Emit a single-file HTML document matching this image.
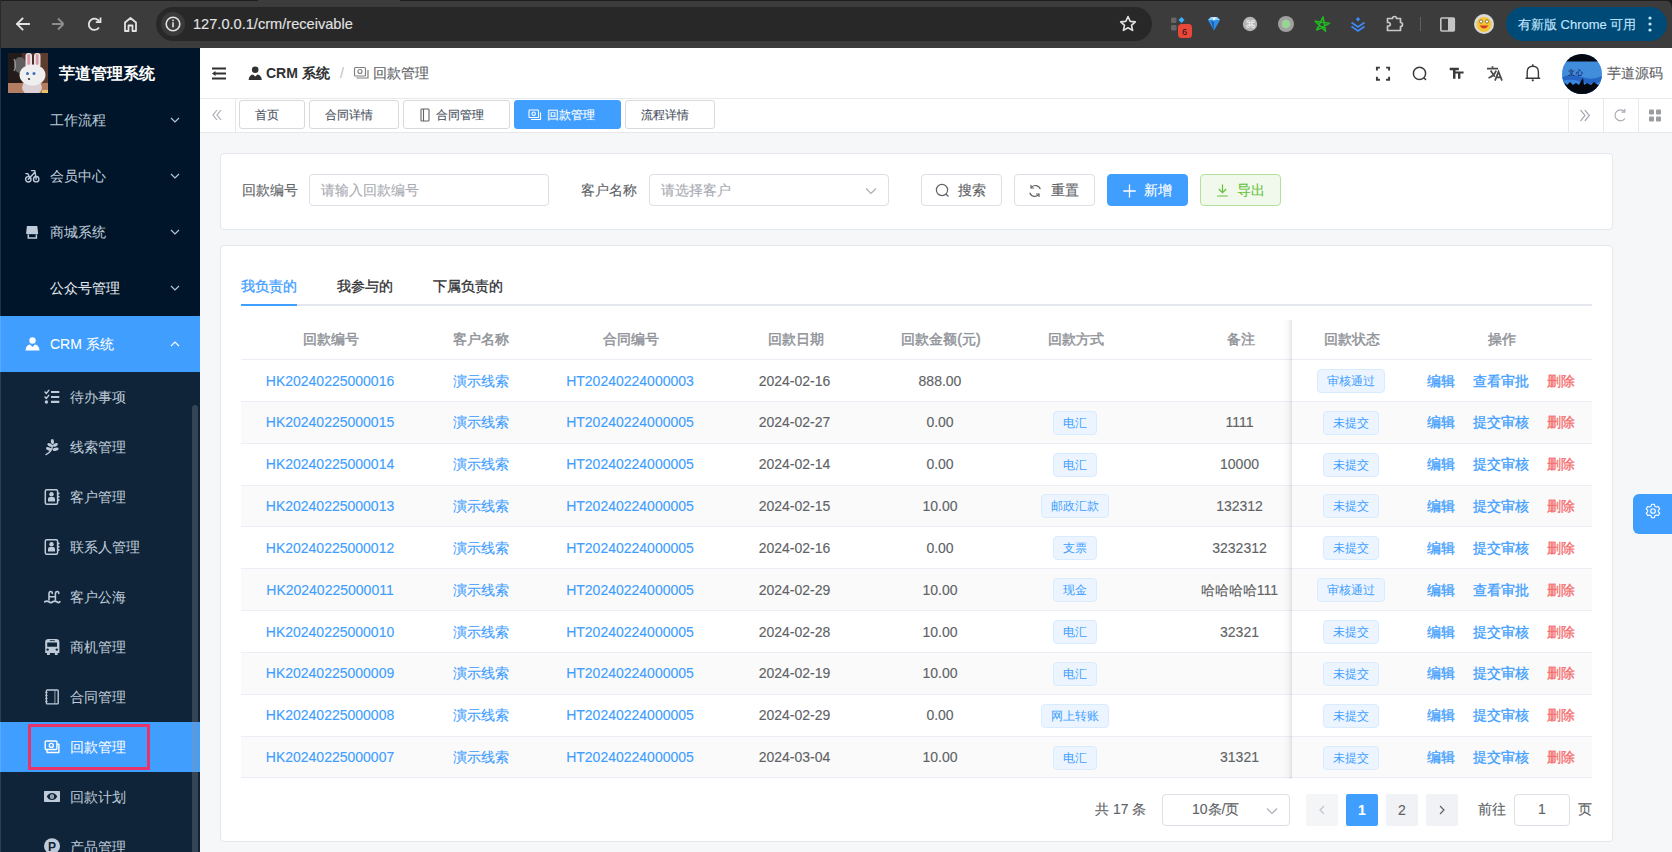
<!DOCTYPE html>
<html><head><meta charset="utf-8"><title>回款管理</title>
<style>
*{box-sizing:border-box;margin:0;padding:0}
html,body{width:1672px;height:852px;overflow:hidden;background:#f5f7f9;font-family:"Liberation Sans",sans-serif;font-size:14px;color:#606266}
body{-webkit-text-stroke:0.12px currentColor}
.nb{-webkit-text-stroke:0}
.th{color:#909399;-webkit-text-stroke:0.45px #909399}
.a{position:absolute}
svg{position:absolute;display:block;overflow:visible}
#chrome{position:absolute;left:0;top:0;width:1672px;height:48px;background:#3c3c3c}
.mi{position:absolute;left:0;width:200px;height:56px;line-height:56px;color:#bfcbd9;font-size:14px;white-space:nowrap}
.mi .t{position:absolute;left:50px;top:0;-webkit-text-stroke:0.05px currentColor}
.si{position:absolute;left:0;width:200px;height:50px;line-height:50px;color:#bfcbd9;font-size:14px;white-space:nowrap}
.si .t{position:absolute;left:69.6px;top:0;-webkit-text-stroke:0.05px currentColor}
.act{background:#409eff;color:#fff}
.tag{position:absolute;top:100px;height:28.5px;line-height:28px;border:1px solid #d9d9d9;border-radius:3px;font-size:12px;color:#495060;background:#fff;white-space:nowrap;text-align:center}
.card{position:absolute;left:220px;width:1393px;background:#fff;border:1px solid #e4e7ed;border-radius:4px}
.lbl{position:absolute;font-size:14px;color:#606266;line-height:32px;white-space:nowrap}
.inp{position:absolute;height:32px;border:1px solid #dcdfe6;border-radius:4px;background:#fff;font-size:14px;color:#a8abb2;line-height:30px;padding-left:11px;white-space:nowrap}
.btn{position:absolute;height:32px;border:1px solid #dcdfe6;border-radius:4px;background:#fff;font-size:14px;color:#606266;line-height:30px;white-space:nowrap}
.row{position:absolute;left:241px;width:1351px;border-bottom:1px solid #ebeef5}
.c{position:absolute;top:0;text-align:center;white-space:nowrap}
.lnk{color:#409eff}
.tg{-webkit-text-stroke:0;position:absolute;height:24px;line-height:22px;border:1px solid #d9ecff;background:#ecf5ff;color:#409eff;border-radius:4px;font-size:12px;text-align:center;white-space:nowrap}
.pg{position:absolute;top:794px;height:32px;width:32px;border-radius:2px;background:#f0f2f5;color:#606266;text-align:center;line-height:32px;font-size:14px}
</style></head><body>
<div id="chrome"><div class="a" style="left:0;top:0;width:258px;height:1.3px;background:#1e1f1e"></div><div class="a" style="left:400px;top:0;width:1272px;height:1.3px;background:#1e1f1e"></div><div class="a" style="left:1665px;top:0;width:7px;height:7px;background:radial-gradient(circle at 0 7px,transparent 6px,#1e1f1e 7px)"></div><div class="a" style="left:0;top:0;width:1px;height:48px;background:#2a2a2a"></div><svg style="left:0;top:0" width="160" height="48"><g fill="none" stroke="#e3e3e3" stroke-width="1.8" stroke-linecap="square"><path d="M17 24H29M17 24L22.5 18.5M17 24L22.5 29.5"/></g><g fill="none" stroke="#8e8e8e" stroke-width="1.8"><path d="M52 24H63.5M63.5 24L58 18.5M63.5 24L58 29.5"/></g><g fill="none" stroke="#e3e3e3" stroke-width="1.8"><path d="M99.5 22A5.6 5.6 0 1 0 99 27.5"/><path d="M100.5 17.5V22.2H95.8" stroke-linejoin="miter"/><path d="M125 31V22.5L130.5 18L136 22.5V31H132.5V25.5H128.5V31Z" stroke-linejoin="round"/></g></svg><div class="a" style="left:156px;top:7px;width:996px;height:34px;border-radius:17px;background:#282828"></div><div class="a" style="left:161px;top:12px;width:24px;height:24px;border-radius:12px;background:#3a3a3a"></div><svg style="left:0;top:0" width="200" height="48"><circle cx="173" cy="24" r="6.8" fill="none" stroke="#e3e3e3" stroke-width="1.6"/><rect x="172.2" y="22.3" width="1.6" height="5" fill="#e3e3e3"/><rect x="172.2" y="19.6" width="1.6" height="1.6" fill="#e3e3e3"/></svg><div class="a" style="left:193px;top:14px;font-size:14.6px;line-height:20px;color:#e3e3e3;white-space:nowrap">127.0.0.1/crm/receivable</div><svg style="left:1100px;top:0" width="60" height="48"><path d="M28 16.6L30.2 21.4L35.3 21.9L31.5 25.3L32.6 30.4L28 27.8L23.4 30.4L24.5 25.3L20.7 21.9L25.8 21.4Z" fill="none" stroke="#e3e3e3" stroke-width="1.6" stroke-linejoin="round"/></svg><svg style="left:1160px;top:0" width="260" height="48"><rect x="11" y="17.5" width="5.5" height="5.5" rx="1.2" fill="#666"/><rect x="11" y="25" width="5.5" height="5.5" rx="1.2" fill="#666"/><path d="M21.5 17L24.5 20L21.5 23L18.5 20Z" fill="#3bb0ff"/><rect x="18" y="24" width="14" height="14" rx="3.5" fill="#e8473a"/><text x="24.5" y="34.5" font-size="9" font-family="Liberation Sans" text-anchor="middle" fill="#111">6</text><path d="M48 20L51 17H57L60 20L54 30.5Z" fill="#2f8fe8"/><path d="M51 17H57L60 20H48Z" fill="#8fd0ff"/><path d="M52.5 17.5H56L54 21Z" fill="#fff"/><path d="M54 22L54 30.5L51 21Z" fill="#1a5fb0"/><circle cx="90" cy="24" r="7.2" fill="#b5b5b5"/><text x="90" y="28" font-size="11" font-family="Liberation Sans" text-anchor="middle" fill="#eee">&#8984;</text><circle cx="126" cy="24" r="8" fill="#a0a0a0"/><circle cx="126" cy="24" r="4.3" fill="#98d494"/><path d="M163.06 16.97L165.57 31.21L155.17 21.17L169.48 23.18L156.72 29.97Z" fill="none" stroke="#22b522" stroke-width="1.6" stroke-linejoin="round"/><g fill="none" stroke="#3d8af7" stroke-width="1.7"><path d="M191.5 22.5L198 27L204.5 22.5"/><path d="M191.5 26.5L198 31L204.5 26.5"/></g><path d="M198 17L200.2 19.2L198 21.4L195.8 19.2Z" fill="#3d8af7"/><path d="M227.5 18.5H232.5A2 2 0 0 1 236.5 18.5H240.5V22.5A2 2 0 0 1 240.5 26.5V30.5H227.5V26H229A1.8 1.8 0 0 0 229 22.5H227.5Z" fill="none" stroke="#c8c8c8" stroke-width="1.7" stroke-linejoin="round"/><rect x="260" y="17" width="1" height="14" fill="#5f5f5f"/></svg><div class="a" style="left:1420px;top:17px;width:1px;height:14px;background:#5f5f5f"></div><svg style="left:1430px;top:0" width="80" height="48"><rect x="10.8" y="18" width="13.5" height="13" rx="1" fill="none" stroke="#c4c4c4" stroke-width="1.6"/><rect x="18" y="18" width="6.3" height="13" fill="#c4c4c4"/><circle cx="54" cy="24" r="10" fill="#d9d9d9"/><circle cx="54" cy="24.5" r="7.5" fill="#f7c531"/><path d="M49.5 25.5Q54 31.5 58.5 25.5Z" fill="#d23a2a"/><circle cx="51" cy="21.5" r="1.6" fill="#fff" stroke="#333" stroke-width=".6"/><circle cx="57" cy="21.5" r="1.6" fill="#fff" stroke="#333" stroke-width=".6"/></svg><div class="a" style="left:1506px;top:7px;width:161px;height:34px;border-radius:17px;background:#004a77"></div><div class="a" style="left:1518px;top:15px;font-size:13px;line-height:20px;color:#c2e7ff;white-space:nowrap">有新版 Chrome 可用</div><svg style="left:1640px;top:0" width="20" height="48"><circle cx="10" cy="18" r="1.6" fill="#c2e7ff"/><circle cx="10" cy="24" r="1.6" fill="#c2e7ff"/><circle cx="10" cy="30" r="1.6" fill="#c2e7ff"/></svg></div>
<div class="a" style="left:0;top:48px;width:200px;height:804px;background:#001529;overflow:hidden"><svg style="left:8px;top:5px;overflow:hidden" width="40" height="40"><rect width="40" height="40" fill="#4a3028"/><rect x="0" y="0" width="14" height="31" fill="#231b1a"/><rect x="30" y="0" width="10" height="31" fill="#5e3c2e"/><ellipse cx="12" cy="12" rx="6" ry="8" fill="#5f5f60"/><path d="M6 6Q9 12 6 18" stroke="#9a9a9a" stroke-width="1.2" fill="none"/><rect y="30" width="40" height="10" fill="#b47e62"/><rect x="17.5" y="0" width="6.5" height="15" rx="3" fill="#ece6e8"/><rect x="26" y="0" width="6.5" height="15" rx="3" fill="#ece6e8"/><rect x="19.3" y="1" width="2.8" height="11" rx="1.4" fill="#d99aa8"/><rect x="27.8" y="1" width="2.8" height="11" rx="1.4" fill="#d99aa8"/><ellipse cx="24" cy="34.5" rx="10" ry="8" fill="#ddd0d4"/><ellipse cx="24.5" cy="22" rx="13" ry="10.5" fill="#efefef"/><circle cx="19.5" cy="20.5" r="1.5" fill="#3d6fb3"/><circle cx="26" cy="20.5" r="1.5" fill="#3d6fb3"/><circle cx="21" cy="26" r="1.1" fill="#333"/><rect x="34" y="37" width="6" height="3" fill="#e7c36a"/></svg><div class="a nb" style="left:59px;top:14px;font-size:16px;font-weight:bold;color:#fff;line-height:24px;white-space:nowrap">芋道管理系统</div><div class="mi" style="top:44px"><span class="t" style="color:#bfcbd9">工作流程</span><svg style="left:169.5px;top:24px" width="10" height="8"><path d="M1 2L5 6L9 2" fill="none" stroke="#bfcbd9" stroke-width="1.1"/></svg></div><div class="mi" style="top:100px"><span class="t" style="color:#bfcbd9">会员中心</span><svg style="left:169.5px;top:24px" width="10" height="8"><path d="M1 2L5 6L9 2" fill="none" stroke="#bfcbd9" stroke-width="1.1"/></svg></div><svg style="left:25px;top:121px" width="16" height="14"><g fill="none" stroke="#bfcbd9" stroke-width="1.4" stroke-linecap="round" stroke-linejoin="round"><circle cx="3.3" cy="10.3" r="2.7"/><circle cx="11.2" cy="10.2" r="2.7"/><path d="M3.3 10.3L9.8 3.2M6.5 1.6H9.8L11.2 10.2M0.8 4.6H2.8L4.2 7.5"/></g></svg><div class="mi" style="top:156px"><span class="t" style="color:#bfcbd9">商城系统</span><svg style="left:169.5px;top:24px" width="10" height="8"><path d="M1 2L5 6L9 2" fill="none" stroke="#bfcbd9" stroke-width="1.1"/></svg></div><svg style="left:25px;top:177px" width="14" height="14"><path d="M1.9 1H12.3L13.2 8.8Q12.4 9.6 11.2 8.9Q10 9.8 8.8 8.9Q7.6 9.8 6.4 8.9Q5.2 9.8 4 8.9Q2.8 9.6 1.1 8.8Z" fill="#bfcbd9"/><path d="M3.3 9.5V13H11.4V9.5" fill="none" stroke="#bfcbd9" stroke-width="1.5"/></svg><div class="mi" style="top:212px"><span class="t" style="color:#e6ebf1">公众号管理</span><svg style="left:169.5px;top:24px" width="10" height="8"><path d="M1 2L5 6L9 2" fill="none" stroke="#bfcbd9" stroke-width="1.1"/></svg></div><div class="mi act" style="top:268px"><span class="t" style="color:#fff">CRM 系统</span><svg style="left:169.5px;top:24px" width="10" height="8"><path d="M1 6L5 2L9 6" fill="none" stroke="#fff" stroke-width="1.1"/></svg></div><svg style="left:25px;top:289px" width="15" height="14"><circle cx="7.5" cy="3.5" r="3.2" fill="#fff"/><path d="M0.5 13.5Q1 8 5 7.5L7.5 10L10 7.5Q14 8 14.5 13.5Z" fill="#fff"/></svg><div class="a" style="left:0;top:324px;width:200px;height:480px;background:#0f2438"><div class="si" style="top:0px"><span class="t">待办事项</span><svg style="left:44px;top:17px" width="17" height="16"><g fill="none" stroke="#bfcbd9" stroke-linecap="round" stroke-linejoin="round"><path d="M7 3H15.3M7 8H15.3M7 12.9H15.3" stroke-width="2.1" stroke-linecap="butt"/><path d="M1 3L2.4 4.4L4.8 1.4M1 8L2.4 9.4L4.8 6.4" stroke-width="1.5"/></g><circle cx="2.4" cy="13" r="1.7" fill="#bfcbd9"/></svg></div><div class="si" style="top:50px"><span class="t">线索管理</span><svg style="left:44px;top:17px" width="16" height="17"><g fill="#bfcbd9"><ellipse cx="8.4" cy="2.6" rx="1.6" ry="2.6" transform="rotate(-8 8.4 2.6)"/><ellipse cx="5.8" cy="5.9" rx="2.7" ry="1.5" transform="rotate(28 5.8 5.9)"/><ellipse cx="11.4" cy="5.9" rx="2.7" ry="1.5" transform="rotate(-28 11.4 5.9)"/><ellipse cx="4.8" cy="9.9" rx="3" ry="1.6" transform="rotate(18 4.8 9.9)"/><ellipse cx="11.7" cy="10.3" rx="3" ry="1.6" transform="rotate(-12 11.7 10.3)"/></g><path d="M8.3 6.5Q8.4 12.5 2 15.6" fill="none" stroke="#bfcbd9" stroke-width="1.4" stroke-linecap="round"/></svg></div><div class="si" style="top:100px"><span class="t">客户管理</span><svg style="left:44px;top:17px" width="16" height="17"><rect x="1.3" y="0.7" width="12.3" height="14.6" rx="1.5" fill="none" stroke="#bfcbd9" stroke-width="1.5"/><circle cx="7.5" cy="5.3" r="2.2" fill="#bfcbd9"/><path d="M4 12.5V10Q4 8 6 8H9Q11 8 11 10V12.5Z" fill="#bfcbd9"/><circle cx="14.6" cy="4.4" r="1" fill="#bfcbd9"/><circle cx="14.6" cy="7.8" r="1" fill="#bfcbd9"/><circle cx="14.6" cy="11" r="1" fill="#bfcbd9"/></svg></div><div class="si" style="top:150px"><span class="t">联系人管理</span><svg style="left:44px;top:17px" width="16" height="17"><rect x="1.3" y="0.7" width="12.3" height="14.6" rx="1.5" fill="none" stroke="#bfcbd9" stroke-width="1.5"/><circle cx="7.5" cy="5.3" r="2.2" fill="#bfcbd9"/><path d="M4 12.5V10Q4 8 6 8H9Q11 8 11 10V12.5Z" fill="#bfcbd9"/><circle cx="14.6" cy="4.4" r="1" fill="#bfcbd9"/><circle cx="14.6" cy="7.8" r="1" fill="#bfcbd9"/><circle cx="14.6" cy="11" r="1" fill="#bfcbd9"/></svg></div><div class="si" style="top:200px"><span class="t">客户公海</span><svg style="left:44px;top:17px" width="17" height="16"><g fill="none" stroke="#bfcbd9" stroke-width="1.6" stroke-linecap="round"><path d="M5 11V5Q5 2.5 6.8 2.5Q8.3 2.5 8.3 4.5M11.4 11V5Q11.4 2.5 13.2 2.5Q14.8 2.5 14.8 4.5M5 7.8H11.4"/><path d="M0.8 12.8Q2.8 11.3 4.8 12.8T8.8 12.8T12.8 12.8T15.8 12.8" stroke-width="1.8"/></g></svg></div><div class="si" style="top:250px"><span class="t">商机管理</span><svg style="left:44px;top:17px" width="17" height="17"><path d="M1.2 3Q1.2 0 4.5 0H12Q15.4 0 15.4 3V14H13.6V16H10.8V14H5.8V16H3V14H1.2Z" fill="#bfcbd9"/><rect x="3.2" y="3.6" width="9.8" height="4.1" rx=".5" fill="#0f2438"/><path d="M5.8 1.6H10.8" stroke="#0f2438" stroke-width=".8"/><circle cx="3.6" cy="10.6" r="1.2" fill="#0f2438"/><circle cx="12.8" cy="10.6" r="1.2" fill="#0f2438"/></svg></div><div class="si" style="top:300px"><span class="t">合同管理</span><svg style="left:44px;top:17px" width="16" height="16"><g fill="none" stroke="#bfcbd9"><rect x="2.4" y="1" width="11.8" height="13.9" rx=".8" stroke-width="1.4"/><path d="M10.9 1.5V14.5" stroke-width="1.3" stroke-opacity=".6"/></g><g fill="#bfcbd9"><path d="M2.4 2.4L3.8 3.4L2.4 4.4L1 3.4Z"/><path d="M2.4 5.4L3.8 6.4L2.4 7.4L1 6.4Z"/><path d="M2.4 8.4L3.8 9.4L2.4 10.4L1 9.4Z"/><path d="M2.4 11.6L3.8 12.6L2.4 13.6L1 12.6Z"/></g></svg></div><div class="si act" style="top:350px"><span class="t">回款管理</span><svg style="left:44px;top:17px" width="17" height="16"><g fill="none" stroke="#fff" stroke-width="1.4" stroke-linejoin="round"><rect x="1.2" y="2" width="11.7" height="8.5" rx="1"/><circle cx="7.3" cy="6.4" r="2"/><path d="M3 10.8V13.5H14.9V5.3H13"/></g></svg></div><div class="si" style="top:400px"><span class="t">回款计划</span><svg style="left:44px;top:17px" width="17" height="16"><rect x="0" y="2.1" width="16" height="10.8" rx=".6" fill="#bfcbd9"/><path d="M2.8 7.5Q4.5 4 8 4Q11.5 4 13.2 7.5Q11.5 11 8 11Q4.5 11 2.8 7.5Z" fill="#0f2438"/><ellipse cx="8" cy="7.5" rx="2" ry="2.6" fill="#bfcbd9"/><path d="M8 5.6V9.4" stroke="#0f2438" stroke-width=".6"/></svg></div><div class="si" style="top:450px"><span class="t">产品管理</span><svg style="left:44px;top:17px" width="16" height="16"><circle cx="8" cy="7.2" r="8" fill="#bfcbd9"/><text x="8" y="11.7" font-size="12" font-weight="bold" font-family="Liberation Sans" text-anchor="middle" fill="#0f2438">P</text></svg></div></div><div class="a" style="left:192px;top:357px;width:6px;height:460px;border-radius:3px;background:rgba(144,147,153,.3)"></div><div class="a" style="left:28px;top:676px;width:122px;height:46px;border:3px solid #e8336b"></div><div class="a" style="left:0;top:0;width:1px;height:804px;background:rgba(255,255,255,.12)"></div></div>
<div class="a" style="left:200px;top:48px;width:1472px;height:51px;background:#fff;border-bottom:1px solid #e6e8eb"></div><svg style="left:200px;top:48px" width="1472" height="50"><g fill="#303133"><rect x="12" y="19.5" width="14" height="2"/><rect x="15" y="24.5" width="11" height="2"/><rect x="12" y="29.5" width="14" height="2"/><path d="M12 25.5L15.5 23V28Z"/></g><g fill="#303133"><circle cx="55.2" cy="21.8" r="3.3"/><path d="M48.6 32Q49 27 53 26.5L55.2 28.5L57.4 26.5Q61.4 27 61.8 32Z"/></g><g fill="none" stroke="#808080" stroke-width="1.2"><rect x="154.5" y="19.5" width="11" height="8.5" rx="1"/><circle cx="160" cy="23.5" r="2"/><path d="M156.5 30H168V22"/></g></svg><div class="a nb" style="left:266px;top:63px;font-size:14px;font-weight:bold;color:#303133;line-height:20px;white-space:nowrap">CRM 系统</div><div class="a" style="left:340px;top:63px;font-size:14px;color:#c0c4cc;line-height:20px">/</div><div class="a" style="left:373px;top:63px;font-size:14px;color:#606266;line-height:20px;white-space:nowrap">回款管理</div><svg style="left:1360px;top:48px" width="240" height="50"><g fill="none" stroke="#3a3a3a" stroke-width="1.9"><path d="M16.9 22.6V19.6H19.9M26.1 19.6H29.1V22.6M29.1 28.8V31.8H26.1M19.9 31.8H16.9V28.8"/></g><g fill="none" stroke="#3a3a3a" stroke-width="1.5"><circle cx="59.5" cy="25.4" r="6.1"/><path d="M63.8 29.7L66 31.9"/></g><path d="M89.7 19.8H98.8V22.2H95.5V30.8H93V22.2H89.7Z" fill="#3a3a3a"/><path d="M94.8 23.4H103.6V25.5H100.4V30.8H98V25.5H94.8Z" fill="#3a3a3a"/><g fill="none" stroke="#4a4a4a" stroke-width="1.7"><path d="M127 20.6H138M132.5 18.2V20.6M130.6 22.6L134.8 28.8M136.2 22.6Q134 28 128.5 30"/><path d="M135 32.6L138.5 23.6L142 32.6M136 29.3H141"/></g><g fill="none" stroke="#3a3a3a" stroke-width="1.4"><path d="M165.5 30.2H180.2M167.2 30.2V24Q167.2 18.2 172.8 18.2Q178.4 18.2 178.4 24V30.2"/><path d="M172.8 16.3V18.2"/></g><circle cx="172.8" cy="32.3" r="1.1" fill="#3a3a3a"/></svg><svg style="left:1561.5px;top:53.6px" width="40" height="40"><defs><clipPath id="av"><circle cx="20" cy="20" r="20"/></clipPath></defs><g clip-path="url(#av)"><rect width="40" height="40" fill="#3f8ddb"/><rect width="40" height="7.5" fill="#06080f"/><path d="M0 23Q10 19 20 23T40 22V40H0Z" fill="#2566c4"/><path d="M0 27Q10 24 20 28T40 27V40H0Z" fill="#3a86de"/><path d="M0 31L3 29L5 31L8 28L11 31L14 29L17 31L19 27L21 24L22 31L25 29L29 31L32 28L36 31L40 30V40H0Z" fill="#06080f"/><text x="5.5" y="21" font-size="6.5" font-weight="bold" fill="#1d2b6b" font-family="Liberation Sans">文 心</text></g></svg><div class="a" style="left:1607px;top:63px;font-size:14px;color:#606266;line-height:20px;white-space:nowrap">芋道源码</div><div class="a" style="left:200px;top:99px;width:1472px;height:34px;background:#fff;border-bottom:1px solid #e6e8eb"></div><div class="a" style="left:235px;top:99px;width:1px;height:33px;background:#e6e8eb"></div><svg style="left:200px;top:98px" width="40" height="35"><g fill="none" stroke="#a8abb2" stroke-width="1.2"><path d="M17 12L13 17L17 22M21 12L17 17L21 22"/></g></svg><div class="tag" style="left:239px;width:66px"><span style="position:absolute;left:15px">首页</span></div><div class="tag" style="left:309px;width:90px"><span style="position:absolute;left:15px">合同详情</span></div><div class="tag" style="left:403px;width:107px"><svg style="left:15px;top:7px" width="12" height="14"><g fill="none" stroke="#606266" stroke-width="1.1"><rect x="2" y="1" width="8" height="12" rx=".8"/><path d="M4.5 1V13"/></g></svg><span style="position:absolute;left:32px">合同管理</span></div><div class="tag" style="left:514px;width:107px;background:#409eff;border-color:#409eff;color:#fff"><svg style="left:13px;top:7px" width="14" height="14"><g fill="none" stroke="#fff" stroke-width="1.1"><rect x="1" y="2" width="9.5" height="7.5" rx=".8"/><circle cx="5.7" cy="5.7" r="1.7"/><path d="M3 11.5H12.5V4.5"/></g></svg><span style="position:absolute;left:32px">回款管理</span></div><div class="tag" style="left:625px;width:90px"><span style="position:absolute;left:15px">流程详情</span></div><div class="a" style="left:1568px;top:99px;width:1px;height:33px;background:#e6e8eb"></div><div class="a" style="left:1603px;top:99px;width:1px;height:33px;background:#e6e8eb"></div><div class="a" style="left:1638px;top:99px;width:1px;height:33px;background:#e6e8eb"></div><svg style="left:1568px;top:98px" width="104" height="35"><g fill="none" stroke="#a8abb2" stroke-width="1.2"><path d="M12.5 12L17 17.5L12.5 23M16.8 12L21.3 17.5L16.8 23"/><path d="M56.5 13.5A5.5 5.5 0 1 0 57 20.5"/><path d="M56.8 11V14.2H53.5"/></g><g fill="#9a9ca0"><rect x="81" y="11.6" width="5" height="5" rx="1"/><rect x="88" y="11.6" width="5" height="5" rx="1"/><rect x="81" y="18.6" width="5" height="5" rx="1"/><rect x="88" y="18.6" width="5" height="5" rx="1"/></g></svg><div class="card" style="top:153px;height:77px"><div class="lbl" style="left:21px;top:20px">回款编号</div><div class="inp" style="left:88px;top:20px;width:240px">请输入回款编号</div><div class="lbl" style="left:360px;top:20px">客户名称</div><div class="inp" style="left:428px;top:20px;width:240px">请选择客户<svg style="left:215px;top:11.5px" width="12" height="8"><path d="M1 1.5L6 6.5L11 1.5" fill="none" stroke="#a8abb2" stroke-width="1.1"/></svg></div><div class="btn" style="left:700px;top:20px;width:81px"><svg style="left:12.5px;top:7.5px" width="16" height="16"><circle cx="7" cy="7" r="5.6" fill="none" stroke="#606266" stroke-width="1.2"/><path d="M11 11L13.5 13.5" stroke="#606266" stroke-width="1.2"/></svg><span class="a" style="left:36px">搜索</span></div><div class="btn" style="left:793px;top:20px;width:81px"><svg style="left:13px;top:7.5px" width="16" height="16"><g fill="none" stroke="#606266" stroke-width="1.2"><path d="M12.3 6.2A5.2 5.2 0 0 0 3 4.8M1.8 9.8A5.2 5.2 0 0 0 11 11.2"/><path d="M3 2V5H6M11 14V11H8"/></g></svg><span class="a" style="left:36px">重置</span></div><div class="btn" style="left:886px;top:20px;width:81px;background:#409eff;border-color:#409eff;color:#fff"><svg style="left:14px;top:8px" width="16" height="16"><path d="M7.5 1.5V14.5M1.3 8H13.7" stroke="#fff" stroke-width="1.3"/></svg><span class="a" style="left:36px">新增</span></div><div class="btn" style="left:979px;top:20px;width:81px;background:#f0f9eb;border-color:#b3e19d;color:#67c23a"><svg style="left:15px;top:7.5px" width="16" height="16"><g fill="none" stroke="#67c23a" stroke-width="1.2"><path d="M6.5 1.5V9.5M2.8 6L6.5 9.7L10.2 6M1.2 13H11.8"/></g></svg><span class="a" style="left:36px">导出</span></div></div>
<div class="card" style="top:245px;height:597px"></div><div class="a" style="left:241px;top:304px;width:1351px;height:2px;background:#e4e7ed"></div><div class="a" style="left:241px;top:304px;width:56px;height:2px;background:#409eff"></div><div class="a" style="left:241px;top:276px;font-size:14px;line-height:20px;color:#409eff;-webkit-text-stroke:0.3px #409eff;white-space:nowrap">我负责的</div><div class="a" style="left:337px;top:276px;font-size:14px;line-height:20px;color:#303133;-webkit-text-stroke:0.3px #303133;white-space:nowrap">我参与的</div><div class="a" style="left:433px;top:276px;font-size:14px;line-height:20px;color:#303133;-webkit-text-stroke:0.3px #303133;white-space:nowrap">下属负责的</div><div class="row" style="top:320.0px;height:40.0px;background:#fff"><div class="c" style="left:0px;width:180px;line-height:39.0px"><span class="th">回款编号</span></div><div class="c" style="left:180px;width:120px;line-height:39.0px"><span class="th">客户名称</span></div><div class="c" style="left:300px;width:180px;line-height:39.0px"><span class="th">合同编号</span></div><div class="c" style="left:480px;width:150px;line-height:39.0px"><span class="th">回款日期</span></div><div class="c" style="left:630px;width:140px;line-height:39.0px"><span class="th">回款金额(元)</span></div><div class="c" style="left:770px;width:130px;line-height:39.0px"><span class="th">回款方式</span></div><div class="c" style="left:900px;width:200px;line-height:39.0px"><span class="th">备注</span></div></div><div class="row" style="top:360.00px;height:41.85px;background:#fff"><div class="c" style="left:-1px;top:0.5px;width:180px;line-height:40.85px;color:#409eff">HK20240225000016</div><div class="c" style="left:180px;top:0.5px;width:120px;line-height:40.85px;color:#409eff">演示线索</div><div class="c" style="left:299px;top:0.5px;width:180px;line-height:40.85px;color:#409eff">HT20240224000003</div><div class="c" style="left:478.5px;top:0.5px;width:150px;line-height:40.85px;">2024-02-16</div><div class="c" style="left:629px;top:0.5px;width:140px;line-height:40.85px;">888.00</div><div class="a" style="left:1051px;top:0;width:300px;height:40.85px;background:#fff"></div><div class="tg" style="left:1076.0px;top:8.93px;width:67.5px">审核通过</div><div class="a" style="left:1186px;top:0.5px;line-height:40.85px;color:#409eff;white-space:nowrap;-webkit-text-stroke:0.3px #409eff">编辑</div><div class="a" style="left:1232px;top:0.5px;line-height:40.85px;color:#409eff;white-space:nowrap;-webkit-text-stroke:0.3px #409eff">查看审批</div><div class="a" style="left:1306px;top:0.5px;line-height:40.85px;color:#f56c6c;white-space:nowrap;-webkit-text-stroke:0.3px #f56c6c">删除</div></div><div class="row" style="top:401.85px;height:41.85px;background:#fafafa"><div class="c" style="left:-1px;top:0.5px;width:180px;line-height:40.85px;color:#409eff">HK20240225000015</div><div class="c" style="left:180px;top:0.5px;width:120px;line-height:40.85px;color:#409eff">演示线索</div><div class="c" style="left:299px;top:0.5px;width:180px;line-height:40.85px;color:#409eff">HT20240224000005</div><div class="c" style="left:478.5px;top:0.5px;width:150px;line-height:40.85px;">2024-02-27</div><div class="c" style="left:629px;top:0.5px;width:140px;line-height:40.85px;">0.00</div><div class="tg" style="left:812.2px;top:8.93px;width:43.5px">电汇</div><div class="c" style="left:898.5px;top:0.5px;width:200px;line-height:40.85px;">1111</div><div class="a" style="left:1051px;top:0;width:300px;height:40.85px;background:#fafafa"></div><div class="tg" style="left:1082.0px;top:8.93px;width:55.5px">未提交</div><div class="a" style="left:1186px;top:0.5px;line-height:40.85px;color:#409eff;white-space:nowrap;-webkit-text-stroke:0.3px #409eff">编辑</div><div class="a" style="left:1232px;top:0.5px;line-height:40.85px;color:#409eff;white-space:nowrap;-webkit-text-stroke:0.3px #409eff">提交审核</div><div class="a" style="left:1306px;top:0.5px;line-height:40.85px;color:#f56c6c;white-space:nowrap;-webkit-text-stroke:0.3px #f56c6c">删除</div></div><div class="row" style="top:443.70px;height:41.85px;background:#fff"><div class="c" style="left:-1px;top:0.5px;width:180px;line-height:40.85px;color:#409eff">HK20240225000014</div><div class="c" style="left:180px;top:0.5px;width:120px;line-height:40.85px;color:#409eff">演示线索</div><div class="c" style="left:299px;top:0.5px;width:180px;line-height:40.85px;color:#409eff">HT20240224000005</div><div class="c" style="left:478.5px;top:0.5px;width:150px;line-height:40.85px;">2024-02-14</div><div class="c" style="left:629px;top:0.5px;width:140px;line-height:40.85px;">0.00</div><div class="tg" style="left:812.2px;top:8.93px;width:43.5px">电汇</div><div class="c" style="left:898.5px;top:0.5px;width:200px;line-height:40.85px;">10000</div><div class="a" style="left:1051px;top:0;width:300px;height:40.85px;background:#fff"></div><div class="tg" style="left:1082.0px;top:8.93px;width:55.5px">未提交</div><div class="a" style="left:1186px;top:0.5px;line-height:40.85px;color:#409eff;white-space:nowrap;-webkit-text-stroke:0.3px #409eff">编辑</div><div class="a" style="left:1232px;top:0.5px;line-height:40.85px;color:#409eff;white-space:nowrap;-webkit-text-stroke:0.3px #409eff">提交审核</div><div class="a" style="left:1306px;top:0.5px;line-height:40.85px;color:#f56c6c;white-space:nowrap;-webkit-text-stroke:0.3px #f56c6c">删除</div></div><div class="row" style="top:485.55px;height:41.85px;background:#fafafa"><div class="c" style="left:-1px;top:0.5px;width:180px;line-height:40.85px;color:#409eff">HK20240225000013</div><div class="c" style="left:180px;top:0.5px;width:120px;line-height:40.85px;color:#409eff">演示线索</div><div class="c" style="left:299px;top:0.5px;width:180px;line-height:40.85px;color:#409eff">HT20240224000005</div><div class="c" style="left:478.5px;top:0.5px;width:150px;line-height:40.85px;">2024-02-15</div><div class="c" style="left:629px;top:0.5px;width:140px;line-height:40.85px;">10.00</div><div class="tg" style="left:800.2px;top:8.93px;width:67.5px">邮政汇款</div><div class="c" style="left:898.5px;top:0.5px;width:200px;line-height:40.85px;">132312</div><div class="a" style="left:1051px;top:0;width:300px;height:40.85px;background:#fafafa"></div><div class="tg" style="left:1082.0px;top:8.93px;width:55.5px">未提交</div><div class="a" style="left:1186px;top:0.5px;line-height:40.85px;color:#409eff;white-space:nowrap;-webkit-text-stroke:0.3px #409eff">编辑</div><div class="a" style="left:1232px;top:0.5px;line-height:40.85px;color:#409eff;white-space:nowrap;-webkit-text-stroke:0.3px #409eff">提交审核</div><div class="a" style="left:1306px;top:0.5px;line-height:40.85px;color:#f56c6c;white-space:nowrap;-webkit-text-stroke:0.3px #f56c6c">删除</div></div><div class="row" style="top:527.40px;height:41.85px;background:#fff"><div class="c" style="left:-1px;top:0.5px;width:180px;line-height:40.85px;color:#409eff">HK20240225000012</div><div class="c" style="left:180px;top:0.5px;width:120px;line-height:40.85px;color:#409eff">演示线索</div><div class="c" style="left:299px;top:0.5px;width:180px;line-height:40.85px;color:#409eff">HT20240224000005</div><div class="c" style="left:478.5px;top:0.5px;width:150px;line-height:40.85px;">2024-02-16</div><div class="c" style="left:629px;top:0.5px;width:140px;line-height:40.85px;">0.00</div><div class="tg" style="left:812.2px;top:8.93px;width:43.5px">支票</div><div class="c" style="left:898.5px;top:0.5px;width:200px;line-height:40.85px;">3232312</div><div class="a" style="left:1051px;top:0;width:300px;height:40.85px;background:#fff"></div><div class="tg" style="left:1082.0px;top:8.93px;width:55.5px">未提交</div><div class="a" style="left:1186px;top:0.5px;line-height:40.85px;color:#409eff;white-space:nowrap;-webkit-text-stroke:0.3px #409eff">编辑</div><div class="a" style="left:1232px;top:0.5px;line-height:40.85px;color:#409eff;white-space:nowrap;-webkit-text-stroke:0.3px #409eff">提交审核</div><div class="a" style="left:1306px;top:0.5px;line-height:40.85px;color:#f56c6c;white-space:nowrap;-webkit-text-stroke:0.3px #f56c6c">删除</div></div><div class="row" style="top:569.25px;height:41.85px;background:#fafafa"><div class="c" style="left:-1px;top:0.5px;width:180px;line-height:40.85px;color:#409eff">HK20240225000011</div><div class="c" style="left:180px;top:0.5px;width:120px;line-height:40.85px;color:#409eff">演示线索</div><div class="c" style="left:299px;top:0.5px;width:180px;line-height:40.85px;color:#409eff">HT20240224000005</div><div class="c" style="left:478.5px;top:0.5px;width:150px;line-height:40.85px;">2024-02-29</div><div class="c" style="left:629px;top:0.5px;width:140px;line-height:40.85px;">10.00</div><div class="tg" style="left:812.2px;top:8.93px;width:43.5px">现金</div><div class="c" style="left:898.5px;top:0.5px;width:200px;line-height:40.85px;">哈哈哈哈111</div><div class="a" style="left:1051px;top:0;width:300px;height:40.85px;background:#fafafa"></div><div class="tg" style="left:1076.0px;top:8.93px;width:67.5px">审核通过</div><div class="a" style="left:1186px;top:0.5px;line-height:40.85px;color:#409eff;white-space:nowrap;-webkit-text-stroke:0.3px #409eff">编辑</div><div class="a" style="left:1232px;top:0.5px;line-height:40.85px;color:#409eff;white-space:nowrap;-webkit-text-stroke:0.3px #409eff">查看审批</div><div class="a" style="left:1306px;top:0.5px;line-height:40.85px;color:#f56c6c;white-space:nowrap;-webkit-text-stroke:0.3px #f56c6c">删除</div></div><div class="row" style="top:611.10px;height:41.85px;background:#fff"><div class="c" style="left:-1px;top:0.5px;width:180px;line-height:40.85px;color:#409eff">HK20240225000010</div><div class="c" style="left:180px;top:0.5px;width:120px;line-height:40.85px;color:#409eff">演示线索</div><div class="c" style="left:299px;top:0.5px;width:180px;line-height:40.85px;color:#409eff">HT20240224000005</div><div class="c" style="left:478.5px;top:0.5px;width:150px;line-height:40.85px;">2024-02-28</div><div class="c" style="left:629px;top:0.5px;width:140px;line-height:40.85px;">10.00</div><div class="tg" style="left:812.2px;top:8.93px;width:43.5px">电汇</div><div class="c" style="left:898.5px;top:0.5px;width:200px;line-height:40.85px;">32321</div><div class="a" style="left:1051px;top:0;width:300px;height:40.85px;background:#fff"></div><div class="tg" style="left:1082.0px;top:8.93px;width:55.5px">未提交</div><div class="a" style="left:1186px;top:0.5px;line-height:40.85px;color:#409eff;white-space:nowrap;-webkit-text-stroke:0.3px #409eff">编辑</div><div class="a" style="left:1232px;top:0.5px;line-height:40.85px;color:#409eff;white-space:nowrap;-webkit-text-stroke:0.3px #409eff">提交审核</div><div class="a" style="left:1306px;top:0.5px;line-height:40.85px;color:#f56c6c;white-space:nowrap;-webkit-text-stroke:0.3px #f56c6c">删除</div></div><div class="row" style="top:652.95px;height:41.85px;background:#fafafa"><div class="c" style="left:-1px;top:0.5px;width:180px;line-height:40.85px;color:#409eff">HK20240225000009</div><div class="c" style="left:180px;top:0.5px;width:120px;line-height:40.85px;color:#409eff">演示线索</div><div class="c" style="left:299px;top:0.5px;width:180px;line-height:40.85px;color:#409eff">HT20240224000005</div><div class="c" style="left:478.5px;top:0.5px;width:150px;line-height:40.85px;">2024-02-19</div><div class="c" style="left:629px;top:0.5px;width:140px;line-height:40.85px;">10.00</div><div class="tg" style="left:812.2px;top:8.93px;width:43.5px">电汇</div><div class="a" style="left:1051px;top:0;width:300px;height:40.85px;background:#fafafa"></div><div class="tg" style="left:1082.0px;top:8.93px;width:55.5px">未提交</div><div class="a" style="left:1186px;top:0.5px;line-height:40.85px;color:#409eff;white-space:nowrap;-webkit-text-stroke:0.3px #409eff">编辑</div><div class="a" style="left:1232px;top:0.5px;line-height:40.85px;color:#409eff;white-space:nowrap;-webkit-text-stroke:0.3px #409eff">提交审核</div><div class="a" style="left:1306px;top:0.5px;line-height:40.85px;color:#f56c6c;white-space:nowrap;-webkit-text-stroke:0.3px #f56c6c">删除</div></div><div class="row" style="top:694.80px;height:41.85px;background:#fff"><div class="c" style="left:-1px;top:0.5px;width:180px;line-height:40.85px;color:#409eff">HK20240225000008</div><div class="c" style="left:180px;top:0.5px;width:120px;line-height:40.85px;color:#409eff">演示线索</div><div class="c" style="left:299px;top:0.5px;width:180px;line-height:40.85px;color:#409eff">HT20240224000005</div><div class="c" style="left:478.5px;top:0.5px;width:150px;line-height:40.85px;">2024-02-29</div><div class="c" style="left:629px;top:0.5px;width:140px;line-height:40.85px;">0.00</div><div class="tg" style="left:800.2px;top:8.93px;width:67.5px">网上转账</div><div class="a" style="left:1051px;top:0;width:300px;height:40.85px;background:#fff"></div><div class="tg" style="left:1082.0px;top:8.93px;width:55.5px">未提交</div><div class="a" style="left:1186px;top:0.5px;line-height:40.85px;color:#409eff;white-space:nowrap;-webkit-text-stroke:0.3px #409eff">编辑</div><div class="a" style="left:1232px;top:0.5px;line-height:40.85px;color:#409eff;white-space:nowrap;-webkit-text-stroke:0.3px #409eff">提交审核</div><div class="a" style="left:1306px;top:0.5px;line-height:40.85px;color:#f56c6c;white-space:nowrap;-webkit-text-stroke:0.3px #f56c6c">删除</div></div><div class="row" style="top:736.65px;height:41.85px;background:#fafafa"><div class="c" style="left:-1px;top:0.5px;width:180px;line-height:40.85px;color:#409eff">HK20240225000007</div><div class="c" style="left:180px;top:0.5px;width:120px;line-height:40.85px;color:#409eff">演示线索</div><div class="c" style="left:299px;top:0.5px;width:180px;line-height:40.85px;color:#409eff">HT20240224000005</div><div class="c" style="left:478.5px;top:0.5px;width:150px;line-height:40.85px;">2024-03-04</div><div class="c" style="left:629px;top:0.5px;width:140px;line-height:40.85px;">10.00</div><div class="tg" style="left:812.2px;top:8.93px;width:43.5px">电汇</div><div class="c" style="left:898.5px;top:0.5px;width:200px;line-height:40.85px;">31321</div><div class="a" style="left:1051px;top:0;width:300px;height:40.85px;background:#fafafa"></div><div class="tg" style="left:1082.0px;top:8.93px;width:55.5px">未提交</div><div class="a" style="left:1186px;top:0.5px;line-height:40.85px;color:#409eff;white-space:nowrap;-webkit-text-stroke:0.3px #409eff">编辑</div><div class="a" style="left:1232px;top:0.5px;line-height:40.85px;color:#409eff;white-space:nowrap;-webkit-text-stroke:0.3px #409eff">提交审核</div><div class="a" style="left:1306px;top:0.5px;line-height:40.85px;color:#f56c6c;white-space:nowrap;-webkit-text-stroke:0.3px #f56c6c">删除</div></div><div class="a" style="left:1292px;top:320.0px;width:300px;height:39.0px;background:#fff"></div><div class="c" style="position:absolute;left:1292px;top:320.0px;width:120px;line-height:39.0px"><span class="th">回款状态</span></div><div class="c" style="position:absolute;left:1412px;top:320.0px;width:180px;line-height:39.0px"><span class="th">操作</span></div><div class="a" style="left:1282px;top:320.0px;width:10px;height:458.50px;background:linear-gradient(to right,rgba(0,0,0,0) 0%,rgba(0,0,0,.025) 60%,rgba(0,0,0,.1) 100%)"></div><div class="a" style="left:1095px;top:799.2px;font-size:14px;line-height:20px;color:#606266;white-space:nowrap">共 17 条</div><div class="inp" style="left:1162px;top:794px;width:128px;color:#606266;padding-left:29px;line-height:28.6px">10条/页<svg style="left:103px;top:12px" width="12" height="8"><path d="M1 1.5L6 6.5L11 1.5" fill="none" stroke="#a8abb2" stroke-width="1.1"/></svg></div><div class="pg" style="left:1306px;background:#f4f5f7"><svg style="left:12px;top:11px" width="8" height="10"><path d="M6 1L2 5L6 9" fill="none" stroke="#c0c4cc" stroke-width="1.2"/></svg></div><div class="pg" style="left:1346px;background:#409eff;color:#fff;font-weight:bold">1</div><div class="pg" style="left:1386px">2</div><div class="pg" style="left:1426px"><svg style="left:12px;top:11px" width="8" height="10"><path d="M2 1L6 5L2 9" fill="none" stroke="#606266" stroke-width="1.2"/></svg></div><div class="a" style="left:1478px;top:799.2px;font-size:14px;line-height:20px;color:#606266;white-space:nowrap">前往</div><div class="inp" style="left:1514px;top:794px;width:56px;color:#606266;text-align:center;padding-left:0;line-height:28.6px">1</div><div class="a" style="left:1578px;top:799.2px;font-size:14px;line-height:20px;color:#606266">页</div><div class="a" style="left:1633px;top:494px;width:48px;height:40px;border-radius:6px;background:#409eff"></div><svg style="left:1645px;top:503px" width="16" height="16"><g fill="none" stroke="#fff" stroke-width="1.1"><path d="M6.6 1.3H9.4L9.9 3.2L11.4 4.1L13.3 3.5L14.7 5.9L13.3 7.3V8.7L14.7 10.1L13.3 12.5L11.4 11.9L9.9 12.8L9.4 14.7H6.6L6.1 12.8L4.6 11.9L2.7 12.5L1.3 10.1L2.7 8.7V7.3L1.3 5.9L2.7 3.5L4.6 4.1L6.1 3.2Z" stroke-linejoin="round"/><circle cx="8" cy="8" r="2.3"/></g></svg>
</body></html>
